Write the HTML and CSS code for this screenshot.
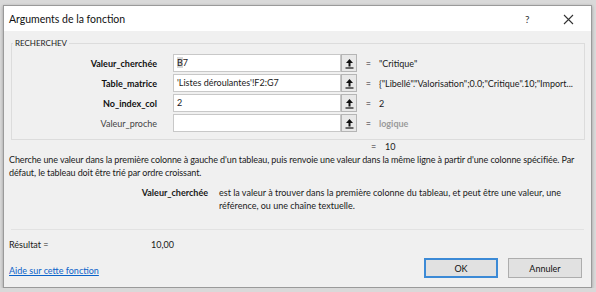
FILE: index.html
```html
<!DOCTYPE html>
<html>
<head>
    <meta charset="UTF-8">
    <title>Arguments de la fonction</title>
    <link rel="stylesheet" href="styles.css">
</head>
<body>
    <div class="dialog">
        <div class="titlebar">
            <span class="title">Arguments de la fonction</span>
            <span class="help">?</span>
            <span class="close">
                <svg width="11" height="11" viewBox="0 0 11 11"><path d="M1 1L10 10M10 1L1 10" stroke="#333" stroke-width="1.1" fill="none"/></svg>
            </span>
        </div>

        <div class="content">
            <fieldset class="group">
                <legend>RECHERCHEV</legend>
                <div class="args">
                    <label class="req">Valeur_cherchée</label>
                    <div class="field"><span class="sel">B</span>7</div>
                    <button class="collapse"><svg width="9" height="11" viewBox="0 0 9 11"><path d="M4.5 1L1 5H3.5V8.5H5.5V5H8Z" fill="#111"/><path d="M0.5 10H8.5" stroke="#111" stroke-width="1.2"/></svg></button>
                    <span class="eq">=</span>
                    <span class="val">"Critique"</span>

                    <label class="req">Table_matrice</label>
                    <div class="field">'Listes déroulantes'!F2:G7</div>
                    <button class="collapse"><svg width="9" height="11" viewBox="0 0 9 11"><path d="M4.5 1L1 5H3.5V8.5H5.5V5H8Z" fill="#111"/><path d="M0.5 10H8.5" stroke="#111" stroke-width="1.2"/></svg></button>
                    <span class="eq">=</span>
                    <span class="val">{"Libellé"."Valorisation";0.0;"Critique".10;"Import...</span>

                    <label class="req">No_index_col</label>
                    <div class="field">2</div>
                    <button class="collapse"><svg width="9" height="11" viewBox="0 0 9 11"><path d="M4.5 1L1 5H3.5V8.5H5.5V5H8Z" fill="#111"/><path d="M0.5 10H8.5" stroke="#111" stroke-width="1.2"/></svg></button>
                    <span class="eq">=</span>
                    <span class="val">2</span>

                    <label>Valeur_proche</label>
                    <div class="field"></div>
                    <button class="collapse"><svg width="9" height="11" viewBox="0 0 9 11"><path d="M4.5 1L1 5H3.5V8.5H5.5V5H8Z" fill="#111"/><path d="M0.5 10H8.5" stroke="#111" stroke-width="1.2"/></svg></button>
                    <span class="eq">=</span>
                    <span class="val muted">logique</span>
                </div>
            </fieldset>

            <div class="total"><span class="eq">=</span><span>10</span></div>

            <p class="desc">Cherche une valeur dans la première colonne à gauche d'un tableau, puis renvoie une valeur dans la même ligne à partir d'une colonne spécifiée. Par défaut, le tableau doit être trié par ordre croissant.</p>

            <div class="argdesc">
                <span class="argname">Valeur_cherchée</span>
                <span class="argtext">est la valeur à trouver dans la première colonne du tableau, et peut être une valeur, une référence, ou une chaîne textuelle.</span>
            </div>

            <hr class="sep">

            <div class="result">
                <span class="result-label">Résultat =</span>
                <span>10,00</span>
            </div>

            <div class="footer">
                <a href="#" class="link">Aide sur cette fonction</a>
                <div class="buttons">
                    <button class="btn primary">OK</button>
                    <button class="btn">Annuler</button>
                </div>
            </div>
        </div>
    </div>
</body>
</html>
```

FILE: styles.css
```css
body {
    margin: 0;
    padding: 5px 4px 0 3px;
    background-color: #d9d9d9;
    font-family: Lato, "Noto Sans", sans-serif;
    font-size: 9px;
    color: #1a1a1a;
}
.dialog {
    height: 283px;
    background-color: #f0f0f0;
    border: 1px solid #9a9a9a;
    box-sizing: border-box;
    box-shadow: 0 1px 3px rgba(0, 0, 0, 0.3);
}
.titlebar {
    height: 25px;
    background-color: #ffffff;
    display: flex;
    align-items: center;
    padding-left: 5px;
}
.title {
    font-size: 10.5px;
    color: #111;
    flex: 1;
}
.help {
    font-size: 10px;
    color: #333;
    width: 38px;
}
.close {
    width: 28px;
    display: flex;
    padding-top: 1px;
}
.content {
    padding: 7px 6px 0 5px;
}
.group {
    margin: 0 0 0 2px;
    padding: 6px 0 7px 0;
    border: 1px solid #dcdcdc;
    width: 574px;
    box-sizing: border-box;
}
.group legend {
    padding: 0 2px;
    margin-left: 1px;
    font-size: 8px;
    color: #222;
}
.args {
    display: grid;
    grid-template-columns: 153px 176px 16px 20px 1fr;
    grid-auto-rows: 18px;
    row-gap: 2px;
    column-gap: 0;
    align-items: center;
}
.args label {
    text-align: right;
    padding-right: 8px;
    color: #444;
}
.args label.req {
    font-weight: bold;
    color: #111;
}
.field {
    margin-left: 8px;
    height: 18px;
    box-sizing: border-box;
    background-color: #fff;
    border: 1px solid #c8c8c8;
    padding: 2px 4px 0 3px;
    white-space: nowrap;
    overflow: hidden;
}
.sel {
    background-color: #d8d8d8;
}
.collapse {
    width: 16px;
    height: 18px;
    padding: 0;
    border: 1px solid #b5b5b5;
    background-color: #e8e8e8;
    display: flex;
    align-items: center;
    justify-content: center;
}
.eq {
    text-align: right;
    padding-right: 6px;
}
.val {
    white-space: nowrap;
    padding-left: 2px;
}
.muted {
    color: #9a9a9a;
    font-weight: bold;
}
.total {
    display: flex;
    padding-left: 362px;
    margin-top: 0;
    height: 13px;
    align-items: center;
}
.total .eq {
    width: 14px;
    text-align: left;
    padding-right: 0;
}
.desc {
    margin: 0 -4px 0 0;
    line-height: 13px;
    letter-spacing: -0.1px;
}
.argdesc {
    display: flex;
    margin-top: 7px;
    line-height: 13px;
}
.argname {
    font-weight: bold;
    width: 199px;
    text-align: right;
    flex-shrink: 0;
}
.argtext {
    padding-left: 11px;
    width: 350px;
}
.sep {
    border: none;
    border-top: 1px solid #e2e2e2;
    margin: 17px 1px 0 2px;
}
.result {
    display: flex;
    margin-top: 9px;
}
.result-label {
    width: 142px;
}
.footer {
    display: flex;
    align-items: center;
    justify-content: space-between;
    margin-top: 8px;
}
.link {
    color: #0b63c9;
    text-decoration: underline;
    margin-top: 4px;
}
.buttons {
    display: flex;
    gap: 10px;
    margin-right: 3px;
}
.btn {
    width: 74px;
    height: 20px;
    font-family: Lato, "Noto Sans", sans-serif;
    font-size: 9px;
    color: #111;
    background-color: #e1e1e1;
    border: 1px solid #adadad;
}
.btn.primary {
    border: 2px solid #3c8ad6;
}
```
